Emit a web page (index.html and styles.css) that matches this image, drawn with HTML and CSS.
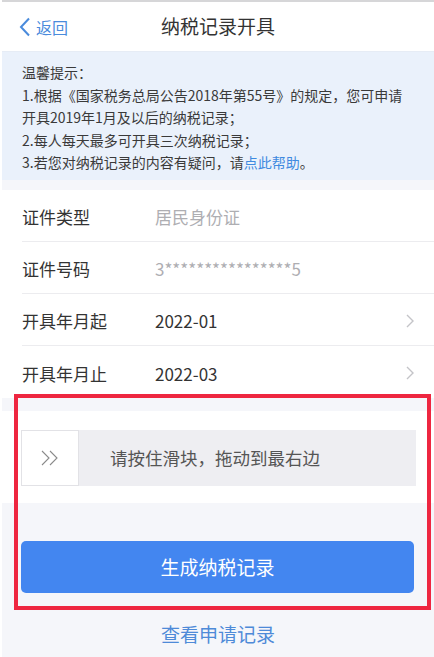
FILE: index.html
```html
<!DOCTYPE html>
<html lang="zh-CN">
<head>
  <meta charset="UTF-8" />
  <title>纳税记录开具</title>
  <meta name="viewport" content="width=device-width, initial-scale=1.0" />
  <link rel="stylesheet" href="styles.css">
</head>
<body>
  <div class="page">

    <!-- 顶部导航 -->
    <div class="nav-bar">
      <a class="back-link" href="#">
        <svg class="back-icon" width="12" height="20" viewBox="0 0 12 20">
          <path d="M10 1.5 L2 10 L10 18.5" fill="none" stroke="#4a8bdc" stroke-width="2" />
        </svg>
        <span>返回</span>
      </a>
      <div class="nav-title">纳税记录开具</div>
    </div>

    <!-- 温馨提示 -->
    <div class="notice">
      <p>温馨提示：</p>
      <p>1.根据《国家税务总局公告2018年第55号》的规定，您可申请开具2019年1月及以后的纳税记录；</p>
      <p>2.每人每天最多可开具三次纳税记录；</p>
      <p>3.若您对纳税记录的内容有疑问，请<a href="#" class="help-link">点此帮助</a>。</p>
    </div>

    <div class="form-list">
      <div class="form-row">
        <span class="row-label">证件类型</span>
        <span class="row-value muted">居民身份证</span>
      </div>
      <div class="form-row">
        <span class="row-label">证件号码</span>
        <span class="row-value muted">3****************5</span>
      </div>
      <div class="form-row">
        <span class="row-label">开具年月起</span>
        <span class="row-value">2022-01</span>
        <svg class="row-arrow" width="8" height="14" viewBox="0 0 8 14">
          <path d="M1 1 L7 7 L1 13" fill="none" stroke="#c4c4c8" stroke-width="1.4" />
        </svg>
      </div>
      <div class="form-row">
        <span class="row-label">开具年月止</span>
        <span class="row-value">2022-03</span>
        <svg class="row-arrow" width="8" height="14" viewBox="0 0 8 14">
          <path d="M1 1 L7 7 L1 13" fill="none" stroke="#c4c4c8" stroke-width="1.4" />
        </svg>
      </div>
    </div>

    <div class="actions">
      <div class="slider-section">
        <div class="slider">
          <div class="slider-handle">
            <svg width="20" height="16" viewBox="0 0 20 16">
              <path d="M2 1 L9 8 L2 15 M10 1 L17 8 L10 15" fill="none" stroke="#8a8a8a" stroke-width="1.1" />
            </svg>
          </div>
          <div class="slider-text">请按住滑块，拖动到最右边</div>
        </div>
      </div>

      <button class="submit-btn">生成纳税记录</button>

      <a href="#" class="record-link">查看申请记录</a>

      <!-- 红色标注框 -->
      <div class="highlight-box"></div>
    </div>

  </div>
</body>
</html>
```

FILE: styles.css
```css
* {
  box-sizing: border-box;
}

body {
  margin: 0;
  background-color: #ffffff;
  font-family: "Noto Sans CJK SC", "Liberation Sans", sans-serif;
  color: #333;
}

.page {
  margin-left: 2px;
  min-height: 657px;
  background-color: #f5f6fa;
  border-top: 2px solid #d6d6d8;
}

/* 顶部导航 */
.nav-bar {
  height: 50px;
  background-color: #fff;
  display: flex;
  align-items: center;
  justify-content: center;
  position: relative;
  border-bottom: 1px solid #e6ecf5;
}

.back-link {
  position: absolute;
  left: 17px;
  top: 13px;
  display: flex;
  align-items: center;
  gap: 5px;
  color: #4a8bdc;
  text-decoration: none;
  font-size: 16px;
}

.back-icon {
  display: block;
}

.nav-title {
  font-size: 19px;
  color: #333;
  margin-top: -2px;
}

/* 温馨提示 */
.notice {
  background-color: #eaf1fb;
  padding: 9px 20px 6px 20px;
  font-size: 14px;
  line-height: 22.5px;
  color: #3a3a3a;
}

.notice p {
  margin: 0;
}

.help-link {
  color: #3f8ae0;
  text-decoration: none;
}

/* 表单 */
.form-list {
  margin-top: 10px;
  background-color: #fff;
  padding-left: 20px;
}

.form-row {
  height: 52px;
  display: flex;
  align-items: center;
  border-bottom: 1px solid #ececef;
  padding-right: 20px;
  padding-top: 3px;
}

.form-row:last-child {
  border-bottom: none;
}

.row-label {
  width: 133px;
  font-size: 17px;
  color: #333;
}

.row-value {
  flex: 1;
  font-size: 17px;
  color: #333;
}

.row-value.muted {
  color: #aeaeb2;
}

.row-arrow {
  display: block;
}

/* 操作区域 */
.actions {
  position: relative;
  padding-top: 13px;
  padding-bottom: 20px;
}

.slider-section {
  background-color: #fff;
  padding: 19px 18px 17px 19px;
}

.slider {
  height: 56px;
  display: flex;
  align-items: center;
  background-color: #eeeef2;
}

.slider-handle {
  width: 58px;
  height: 56px;
  background-color: #fff;
  border: 1px solid #e2e2e6;
  display: flex;
  align-items: center;
  justify-content: center;
}

.slider-text {
  margin-left: 31px;
  font-size: 17.5px;
  color: #555;
}

.submit-btn {
  display: block;
  width: 393px;
  height: 52px;
  margin: 38px 0 0 19px;
  border: none;
  border-radius: 5px;
  background-color: #4386f0;
  color: #fff;
  font-family: inherit;
  font-size: 19px;
}

.record-link {
  display: block;
  margin-top: 27px;
  text-align: center;
  font-size: 19px;
  color: #4e8ad8;
  text-decoration: none;
}

.highlight-box {
  position: absolute;
  left: 12px;
  top: -4px;
  width: 417px;
  height: 216px;
  border: 4px solid #ee2640;
}
```
